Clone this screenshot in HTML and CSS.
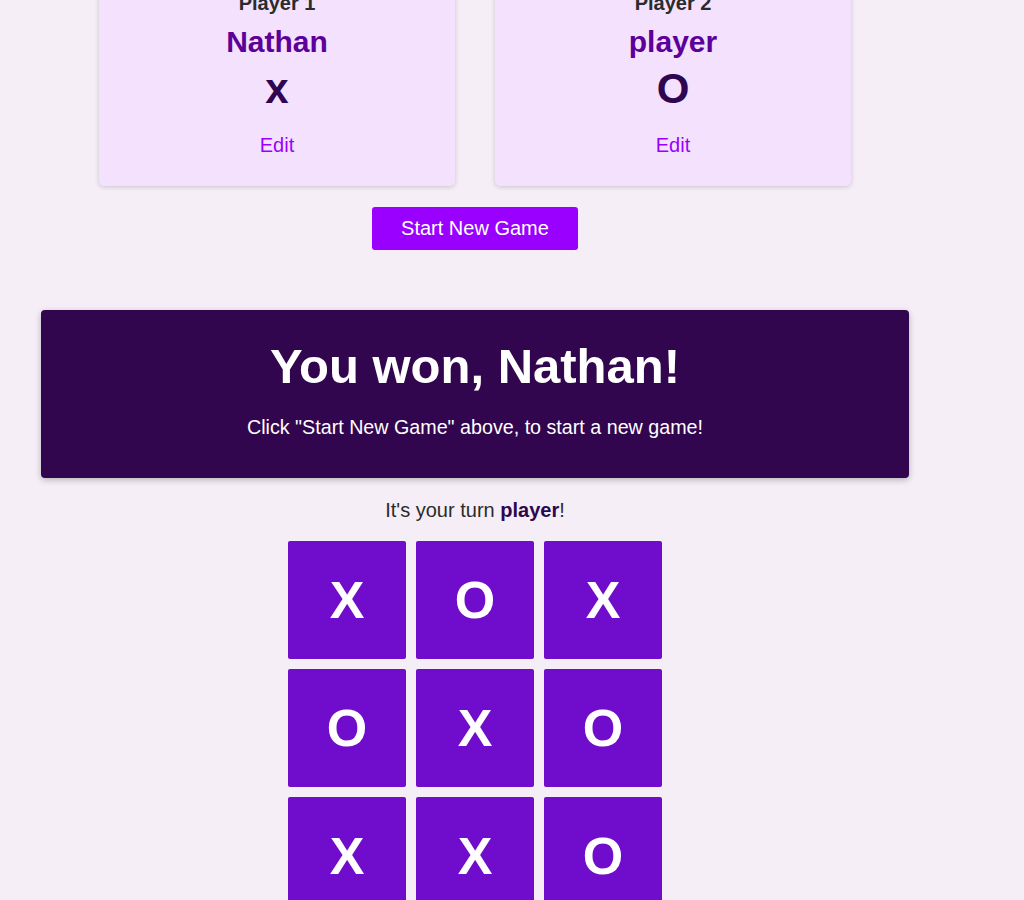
FILE: index.html
```html
<!DOCTYPE html>
<html lang="en">
<head>
<meta charset="utf-8">
<title>Tic-Tac-Toe</title>
<link rel="stylesheet" href="styles.css">
</head>
<body>
<main class="page">
  <ol class="players">
    <li class="player-card">
      <h2 class="player-label">Player 1</h2>
      <p class="player-name">Nathan</p>
      <p class="player-symbol">x</p>
      <button class="edit-btn">Edit</button>
    </li>
    <li class="player-card">
      <h2 class="player-label">Player 2</h2>
      <p class="player-name">player</p>
      <p class="player-symbol">O</p>
      <button class="edit-btn">Edit</button>
    </li>
  </ol>
  <div class="actions">
    <button class="start-btn">Start New Game</button>
  </div>
  <section class="game-over">
    <h2 class="game-over-title">You won, Nathan!</h2>
    <p class="game-over-text">Click "Start New Game" above, to start a new game!</p>
  </section>
  <p class="turn">It's your turn <span class="turn-name">player</span>!</p>
  <ol class="board">
    <li class="cell">X</li>
    <li class="cell">O</li>
    <li class="cell">X</li>
    <li class="cell">O</li>
    <li class="cell">X</li>
    <li class="cell">O</li>
    <li class="cell">X</li>
    <li class="cell">X</li>
    <li class="cell">O</li>
  </ol>
</main>
</body>
</html>
```

FILE: styles.css
```css
* { box-sizing: border-box; }

html, body {
  margin: 0;
  padding: 0;
  background: #f5eef6;
  font-family: "Liberation Sans", Arial, sans-serif;
  color: #2b2b2b;
}

.page {
  width: 950px;
  margin-top: -25px;
  display: flex;
  flex-direction: column;
  align-items: center;
}

.players {
  list-style: none;
  margin: 0;
  padding: 0;
  display: flex;
  gap: 40px;
  justify-content: center;
}

.player-card {
  width: 356px;
  background: #f3e1fd;
  border-radius: 5px;
  box-shadow: 0 1px 5px rgba(0, 0, 0, 0.18);
  padding: 16px 16px 29px;
  display: flex;
  flex-direction: column;
  align-items: center;
  text-align: center;
}

.player-label {
  margin: 0;
  font-size: 20px;
  line-height: 24px;
  font-weight: bold;
  color: #2b2b2b;
}

.player-name {
  margin: 7px 0 0;
  font-size: 30px;
  line-height: 40px;
  font-weight: bold;
  color: #5c0099;
}

.player-symbol {
  margin: 2px 0 0;
  font-size: 42px;
  line-height: 50px;
  font-weight: bold;
  color: #2f0650;
}

.edit-btn {
  margin-top: 19px;
  font: inherit;
  font-size: 20px;
  line-height: 24px;
  color: #9900ff;
  background: none;
  border: none;
  padding: 0;
  cursor: pointer;
}

.actions {
  margin-top: 21px;
  display: flex;
  justify-content: center;
}

.start-btn {
  font: inherit;
  font-size: 20px;
  line-height: 23px;
  padding: 10px 29px;
  color: #ffffff;
  background: #9900ff;
  border: none;
  border-radius: 3px;
  cursor: pointer;
}

.game-over {
  margin-top: 60px;
  width: 868px;
  height: 168px;
  background: #32054f;
  border-radius: 4px;
  box-shadow: 0 2px 6px rgba(0, 0, 0, 0.25);
  padding: 28px 16px 0;
  text-align: center;
  color: #ffffff;
}

.game-over-title {
  margin: 0;
  font-size: 49px;
  line-height: 56px;
  font-weight: bold;
}

.game-over-text {
  margin: 21px 0 0;
  font-size: 19.7px;
  line-height: 24px;
}

.turn {
  margin: 20px 0 0;
  font-size: 20px;
  line-height: 24px;
  color: #2b2b2b;
  text-align: center;
}

.turn-name {
  font-weight: bold;
  color: #2f0650;
}

.board {
  list-style: none;
  margin: 19px 0 0;
  padding: 0;
  display: grid;
  grid-template-columns: repeat(3, 118px);
  grid-auto-rows: 118px;
  gap: 10px;
}

.cell {
  display: flex;
  align-items: center;
  justify-content: center;
  background: #700ccc;
  border-radius: 2px;
  color: #ffffff;
  font-size: 52px;
  font-weight: bold;
}
```
